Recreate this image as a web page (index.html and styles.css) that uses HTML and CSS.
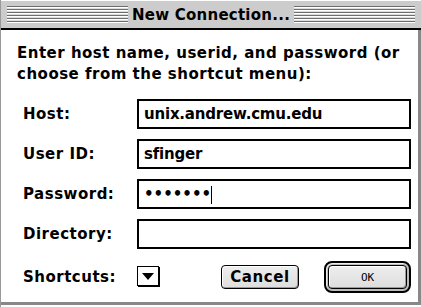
FILE: index.html
```html
<!DOCTYPE html>
<html lang="en">
<head>
  <meta charset="utf-8">
  <link rel="stylesheet" href="styles.css">
  <title>New Connection...</title>
</head>
<body>
  <div class="window">
    <div class="titlebar">
      <span class="stripes"></span>
      <span class="title">New Connection...</span>
      <span class="stripes"></span>
    </div>
    <div class="content">
      <p class="prompt">Enter host name, userid, and password (or<br>choose from the shortcut menu):</p>
      <div class="fields">
        <label for="host">Host:</label>
        <div class="field" id="host">unix.andrew.cmu.edu</div>
        <label for="user">User ID:</label>
        <div class="field" id="user">sfinger</div>
        <label for="pass">Password:</label>
        <div class="field pass" id="pass">&bull;&bull;&bull;&bull;&bull;&bull;&bull;<span class="caret"></span></div>
        <label for="dir">Directory:</label>
        <div class="field" id="dir"></div>
      </div>
      <div class="bottom">
        <label>Shortcuts:</label>
        <span class="popup">
          <svg width="12" height="7" viewBox="0 0 12 7"><polygon points="0,0 12,0 6,7" fill="#000"/></svg>
        </span>
        <span class="spacer"></span>
        <button class="btn cancel">Cancel</button>
        <span class="default-ring"><button class="btn ok">ok</button></span>
      </div>
    </div>
  </div>
</body>
</html>
```

FILE: styles.css
```css
:root {
  --chrome: #cccccc;
  --shade: #888888;
}

body {
  margin: 0;
  background: #fff;
  font-family: "DejaVu Sans", Verdana, sans-serif;
  font-weight: bold;
  color: #000;
}

.window {
  width: 421px;
  height: 307px;
  box-sizing: border-box;
  border-left: 1px solid #999;
  display: flex;
  flex-direction: column;
}

.titlebar {
  height: 27px;
  background: var(--chrome);
  border-top: 1px solid #fff;
  border-bottom: 2px solid #000;
  display: flex;
  align-items: center;
  padding: 0 6px 0 6px;
  box-sizing: content-box;
}

.stripes {
  flex: 1;
  height: 17px;
  background: repeating-linear-gradient(to bottom,
    #6e6e6e 0, #6e6e6e 1px, #fff 1px, #fff 2px, #ddd 2px, #ddd 3px);
}

.title {
  font-size: 15px;
  padding: 0 4px;
  letter-spacing: 0.25px;
}

.content {
  flex: 1;
  border-right: 3px solid var(--shade);
  border-bottom: 3px solid var(--shade);
  margin-bottom: 2px;
  padding: 13px 0 0 16px;
}

.prompt {
  margin: 0;
  font-size: 15px;
  line-height: 21px;
  letter-spacing: 0.5px;
}

.fields {
  margin-top: 14px;
  display: grid;
  grid-template-columns: 114px 274px;
  row-gap: 10px;
  padding-left: 6px;
}

label {
  font-size: 15px;
  letter-spacing: 0.5px;
  align-self: center;
}

.field {
  height: 26px;
  border: 2px solid #000;
  padding-left: 5px;
  font-size: 15px;
  line-height: 26px;
  letter-spacing: -0.2px;
}

.pass {
  font-size: 15px;
  letter-spacing: 0;
}

.caret {
  display: inline-block;
  width: 1px;
  height: 18px;
  background: #000;
  vertical-align: -5px;
}

.bottom {
  margin-top: 11px;
  display: flex;
  align-items: center;
  height: 34px;
  padding-left: 6px;
}

.bottom label {
  width: 114px;
}

.popup {
  width: 20px;
  height: 18px;
  border: 1px solid #000;
  box-shadow: 1px 1px 0 #000;
  display: flex;
  align-items: center;
  justify-content: center;
  margin-bottom: 2px;
}

.spacer {
  flex: 1;
}

.btn {
  font-family: inherit;
  font-weight: bold;
  font-size: 15px;
  color: #000;
  background: linear-gradient(#eee, #ddd);
  border: 1px solid #000;
  border-radius: 4px;
  box-shadow: inset 1px 1px 0 #fff, inset -1px -1px 0 #999;
  padding: 0;
}

.cancel {
  width: 78px;
  height: 24px;
  margin-right: 25px;
  letter-spacing: 0.6px;
}

.default-ring {
  display: flex;
  padding: 2px;
  border: 2px solid #000;
  border-radius: 8px;
  background: #bbb;
  box-shadow: inset 1px 1px 0 #eee;
  margin-right: 7px;
}

.ok {
  width: 79px;
  height: 24px;
  font-weight: normal;
  font-size: 11px;
  text-transform: uppercase;
  font-family: "DejaVu Sans Mono", monospace;
}
```
